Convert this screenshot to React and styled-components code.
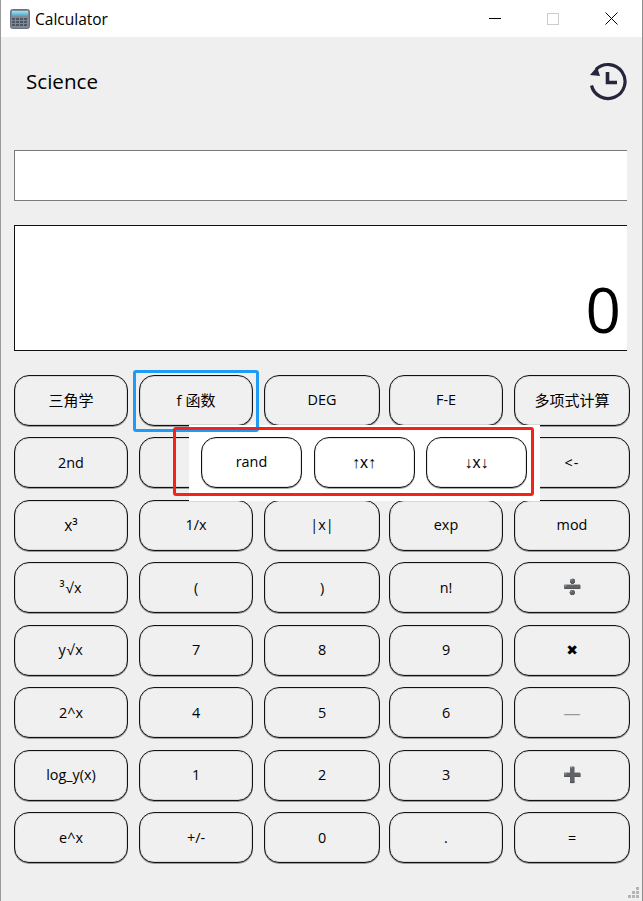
import React from "react";
import styled, { createGlobalStyle } from "styled-components";

const GlobalStyle = createGlobalStyle`
  html, body {
    margin: 0;
    padding: 0;
    overflow: hidden;
    background: #efefef;
  }
  * {
    box-sizing: border-box;
  }
`;

const FONT = `"Open Sans", "Noto Sans CJK SC", sans-serif`;

const Window = styled.div`
  position: relative;
  width: 643px;
  height: 901px;
  overflow: hidden;
  background: #efefef;
  border-left: 1px solid #9a9a9a;
  border-right: 1px solid #8c8c8c;
  font-family: ${FONT};
  color: #000;
`;

const TitleBar = styled.div`
  height: 37px;
  background: #fff;
  display: flex;
  align-items: center;
  padding: 0 2px 0 9px;
`;

const AppTitle = styled.span`
  font-size: 15.5px;
  margin-left: 5px;
  flex: 1;
`;

const WindowControls = styled.div`
  display: flex;
  align-items: center;
  height: 100%;
`;

const ControlButton = styled.div`
  width: 58px;
  height: 100%;
  display: flex;
  align-items: center;
  justify-content: center;
`;

const Content = styled.div`
  padding: 0 0 0 13px;
`;

const Header = styled.div`
  display: flex;
  align-items: center;
  justify-content: space-between;
  height: 88px;
  margin-bottom: 25px;
  padding: 0 14px 0 12px;
`;

const ModeName = styled.h1`
  margin: 0;
  font-size: 20.6px;
  font-weight: 400;
`;

const ExpressionField = styled.div`
  width: 613px;
  height: 51px;
  background: #fff;
  border: 1px solid #7a7a7a;
  border-right: none;
  margin-bottom: 24px;
`;

const ResultField = styled.div`
  width: 613px;
  height: 126px;
  background: #fff;
  border: 1px solid #111;
  border-right: none;
  margin-bottom: 23.75px;
  display: flex;
  align-items: flex-end;
  justify-content: flex-end;
  padding: 0 6px 0 0;
  font-size: 62px;
  line-height: 82px;
`;

const Keypad = styled.div`
  display: grid;
  grid-template-columns: 125px 125px 125px 125px 116px;
  grid-auto-rows: 51px;
  row-gap: 11.5px;
`;

const Key = styled.button`
  width: ${(props) => (props.$wide ? "116px" : "114px")};
  height: 51px;
  padding: 0;
  border: 1px solid #111;
  border-radius: 15px;
  box-shadow: inset 0 0 0 1px rgba(0, 0, 0, 0.1), 0 1px 0 rgba(0, 0, 0, 0.35);
  background: ${(props) => (props.$light ? "#fff" : "#f0f0f0")};
  color: ${(props) => props.$color || "#000"};
  font-family: ${(props) => props.$font || FONT};
  font-size: ${(props) => props.$size || 14.4}px;
  letter-spacing: ${(props) => props.$spacing || 0}px;
  -webkit-text-stroke: ${(props) => props.$stroke || "0"};
  line-height: 1;
`;

const FunctionPopup = styled.div`
  position: absolute;
  left: 188px;
  top: 425px;
  width: 351px;
  height: 76px;
  background: #fff;
  display: flex;
  gap: 11.5px;
  padding: 12px 0 0 12px;
`;

const PopupKey = styled(Key)`
  width: 101px;
`;

const Annotation = styled.div`
  position: absolute;
  left: ${(props) => props.$left}px;
  top: ${(props) => props.$top}px;
  width: ${(props) => props.$width}px;
  height: ${(props) => props.$height}px;
  border: 3px solid ${(props) => props.$color};
  border-radius: 3px;
  pointer-events: none;
`;

const ResizeGrip = styled.svg`
  position: absolute;
  right: 2px;
  bottom: 2px;
`;

const CalculatorIcon = () => (
  <svg width="20" height="20" viewBox="0 0 20 20">
    <defs>
      <linearGradient id="screen" x1="0" y1="0" x2="0" y2="1">
        <stop offset="0" stopColor="#a8dff0" />
        <stop offset="1" stopColor="#45aacb" />
      </linearGradient>
    </defs>
    <rect x="0.5" y="0.5" width="19" height="19" rx="2" fill="#7f8a96" stroke="#66727e" />
    <rect x="2" y="2" width="16" height="5" fill="url(#screen)" />
    {[9, 12, 15].map((y) =>
      [2, 6, 10, 14].map((x) => (
        <rect key={`${x}-${y}`} x={x} y={y} width="3" height="2" fill="#4d5761" />
      ))
    )}
  </svg>
);

const HistoryIcon = () => (
  <svg width="40" height="40" viewBox="0 0 40 40" fill="none">
    <path d="M3.5 24.5A17 17 0 1 0 8 8.5" stroke="#25253c" strokeWidth="3.2" />
    <path d="M2 14L9 6L12 15Z" fill="#25253c" />
    <path d="M19.5 11v10.5h9.5" stroke="#25253c" strokeWidth="3.6" />
  </svg>
);

const OUTLINED = { font: "DejaVu Sans", color: "#aaa", stroke: "0.6px #444" };

const keys = [
  [
    { label: "三角学", size: 15 },
    { label: "f 函数", size: 15 },
    "DEG",
    "F-E",
    { label: "多项式计算", size: 15 },
  ],
  ["2nd", "", "", "", { label: "<-", spacing: 1 }],
  [{ label: "x³", size: 15.5 }, "1/x", "|x|", "exp", "mod"],
  [{ label: "³√x", spacing: 0.8 }, "(", ")", "n!", { label: "➗", size: 15, ...OUTLINED }],
  [{ label: "y√x", spacing: 0.8 }, "7", "8", "9", { label: "✖", size: 14, font: "DejaVu Sans" }],
  ["2^x", "4", "5", "6", { label: "—", size: 17, color: "#999" }],
  ["log_y(x)", "1", "2", "3", { label: "➕", size: 15, ...OUTLINED }],
  ["e^x", "+/-", "0", ".", "="],
];

const popupKeys = [
  { label: "rand" },
  { label: "↑x↑", font: "Liberation Sans", size: 16 },
  { label: "↓x↓", font: "Liberation Sans", size: 16 },
];

const App = () => {
  return (
    <Window>
      <GlobalStyle />
      <TitleBar>
        <CalculatorIcon />
        <AppTitle>Calculator</AppTitle>
        <WindowControls>
          <ControlButton>
            <svg width="12" height="12" viewBox="0 0 12 12">
              <path d="M0 5.5h12" stroke="#000" />
            </svg>
          </ControlButton>
          <ControlButton>
            <svg width="12" height="12" viewBox="0 0 12 12">
              <rect x="0.5" y="0.5" width="11" height="11" fill="none" stroke="#ccc" />
            </svg>
          </ControlButton>
          <ControlButton>
            <svg width="13" height="13" viewBox="0 0 13 13">
              <path d="M0.5 0.5l12 12M12.5 0.5l-12 12" stroke="#000" />
            </svg>
          </ControlButton>
        </WindowControls>
      </TitleBar>
      <Content>
        <Header>
          <ModeName>Science</ModeName>
          <HistoryIcon />
        </Header>
        <ExpressionField />
        <ResultField>0</ResultField>
        <Keypad>
          {keys.flat().map((key, i) => {
            const spec = typeof key === "string" ? { label: key } : key;
            const col = i % 5;
            return (
              <Key
                key={i}
                $wide={col === 2 || col === 4}
                $size={spec.size}
                $font={spec.font}
                $color={spec.color}
                $stroke={spec.stroke}
                $spacing={spec.spacing}
              >
                {spec.label}
              </Key>
            );
          })}
        </Keypad>
      </Content>
      <FunctionPopup>
        {popupKeys.map((spec) => (
          <PopupKey key={spec.label} $light $font={spec.font} $size={spec.size}>
            {spec.label}
          </PopupKey>
        ))}
      </FunctionPopup>
      <Annotation $left={132} $top={370} $width={126} $height={62} $color="#1e9bf5" />
      <Annotation $left={172} $top={427} $width={361} $height={69} $color="#f5221a" />
      <ResizeGrip width="12" height="12" viewBox="0 0 12 12" fill="#b5b5b5">
        <rect x="8" y="0" width="3" height="3" />
        <rect x="4" y="4" width="3" height="3" />
        <rect x="8" y="4" width="3" height="3" />
        <rect x="0" y="8" width="3" height="3" />
        <rect x="4" y="8" width="3" height="3" />
        <rect x="8" y="8" width="3" height="3" />
      </ResizeGrip>
    </Window>
  );
};

export default App;
